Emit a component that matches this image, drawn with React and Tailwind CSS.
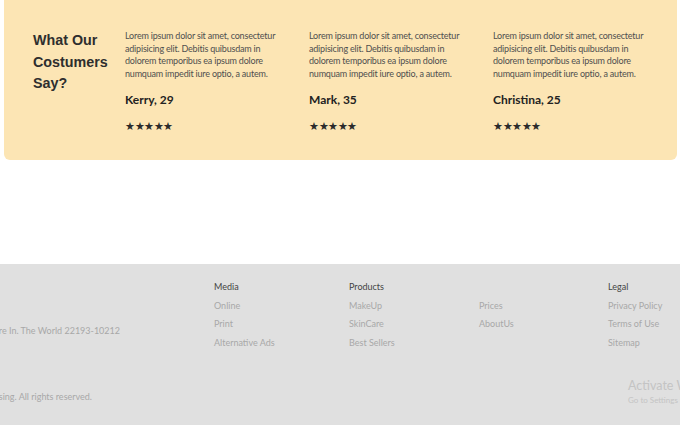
import React from "react";

const reviews = [
  { name: "Kerry, 29" },
  { name: "Mark, 35" },
  { name: "Christina, 25" },
];

const lorem =
  "Lorem ipsum dolor sit amet, consectetur adipisicing elit. Debitis quibusdam in dolorem temporibus ea ipsum dolore numquam impedit iure optio, a autem.";

const FooterCol = ({ title, links, w }) => (
  <div className={`${w} shrink-0`}>
    <h4 className="h-[19px] text-[9px] text-[#444]">{title}</h4>
    <ul className="flex flex-col">
      {links.map((l) => (
        <li key={l} className="h-[18.4px] text-[9px] text-[#a8a8a8]">
          {l}
        </li>
      ))}
    </ul>
  </div>
);

const App = () => {
  return (
    <div className="relative w-[680px] h-[425px] overflow-hidden bg-white font-['Lato',sans-serif]">
      <section className="mx-[3px] ml-[4px] h-[160px] rounded-b-md bg-[#fce5b4] flex pt-[30px]">
        <h2 className="w-[121px] shrink-0 pl-[29px] font-['Liberation_Sans',sans-serif] font-bold text-[14.3px] leading-[21.5px] text-[#2e2e2e]">
          What Our Costumers Say?
        </h2>
        {reviews.map((r) => (
          <div key={r.name} className="w-[184px] shrink-0 pr-[20px]">
            <p className="text-[9px] tracking-[-0.2px] leading-[12.6px] text-[#4f4f4f]">{lorem}</p>
            <h3 className="mt-[11px] text-[12px] font-bold text-[#222]">{r.name}</h3>
            <div className="mt-[10px] text-[10.5px] tracking-[-0.5px] text-[#2b2b2b]">★★★★★</div>
          </div>
        ))}
      </section>

      <footer className="mt-[104px] h-[161px] bg-[#e0e0e0] flex pt-[16px]">
        <div className="w-[214px] shrink-0 flex flex-col">
          <div className="w-[120px] h-[57px] flex justify-end items-end overflow-hidden">
            <p className="whitespace-nowrap text-[9px] text-[#a8a8a8]">
              Address: 1234 Somewhere In. The World 22193-10212
            </p>
          </div>
          <div className="w-[92px] mt-[53px] flex justify-end overflow-hidden">
            <p className="whitespace-nowrap text-[9px] text-[#a8a8a8]">
              © 2023 Blessing. All rights reserved.
            </p>
          </div>
        </div>
        <FooterCol w="w-[135px]" title="Media" links={["Online", "Print", "Alternative Ads"]} />
        <FooterCol w="w-[130px]" title="Products" links={["MakeUp", "SkinCare", "Best Sellers"]} />
        <FooterCol w="w-[129px]" title={"\u00a0"} links={["Prices", "AboutUs"]} />
        <FooterCol w="w-[130px]" title="Legal" links={["Privacy Policy", "Terms of Use", "Sitemap"]} />
      </footer>

      <div className="absolute left-[628px] top-[378px] whitespace-nowrap text-[#c4c4c4]">
        <p className="text-[12.5px] leading-[16px]">Activate Windows</p>
        <p className="text-[8px] leading-[12px]">Go to Settings to activate Windows.</p>
      </div>
    </div>
  );
};

export default App;
